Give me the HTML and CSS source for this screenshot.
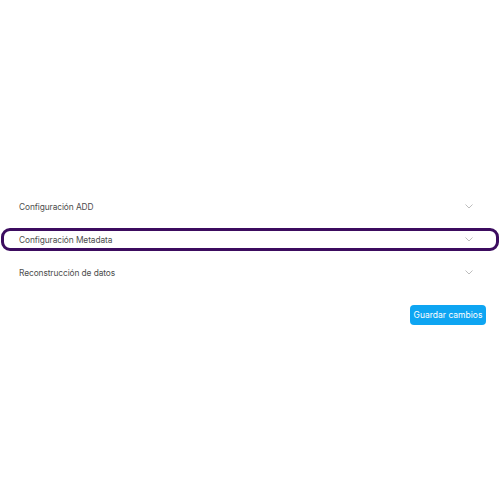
FILE: index.html
```html
<!DOCTYPE html>
<html lang="es">
<head>
<meta charset="utf-8">
<title>Configuración</title>
<link rel="stylesheet" href="styles.css">
</head>
<body>
<main class="page">
  <section class="list">
    <div class="row">
      <span class="label">Configuración ADD</span>
      <svg class="chev" width="8" height="5" viewBox="0 0 8 5"><path d="M0.5 0.5 L4 4 L7.5 0.5" fill="none" stroke="#bdbdbd" stroke-width="1"/></svg>
    </div>
    <div class="row active">
      <span class="label">Configuración Metadata</span>
      <svg class="chev" width="8" height="5" viewBox="0 0 8 5"><path d="M0.5 0.5 L4 4 L7.5 0.5" fill="none" stroke="#bdbdbd" stroke-width="1"/></svg>
    </div>
    <div class="row">
      <span class="label">Reconstrucción de datos</span>
      <svg class="chev" width="8" height="5" viewBox="0 0 8 5"><path d="M0.5 0.5 L4 4 L7.5 0.5" fill="none" stroke="#bdbdbd" stroke-width="1"/></svg>
    </div>
  </section>
  <div class="actions">
    <button class="save">Guardar cambios</button>
  </div>
</main>
</body>
</html>
```
FILE: styles.css
```css
html, body {
  margin: 0;
  padding: 0;
  background: #ffffff;
}
body {
  font-family: "Inter", "Open Sans", sans-serif;
  color: #444444;
}
.page {
  padding-top: 195px;
}
.list {
  display: flex;
  flex-direction: column;
  gap: 10.5px;
  padding: 0 1px;
}
.row {
  box-sizing: border-box;
  height: 22.5px;
  border: 3px solid transparent;
  border-radius: 9px;
  display: flex;
  align-items: center;
  justify-content: space-between;
  padding: 1px 23px 0 15px;
}
.row.active {
  border-color: #3c0c5f;
}
.label {
  font-size: 8.4px;
  color: #4d4d4d;
  letter-spacing: -0.1px;
}
.chev {
  display: block;
}
.actions {
  display: flex;
  justify-content: flex-end;
  padding: 21px 14px 0 0;
}
.save {
  font-family: "Inter", "Open Sans", sans-serif;
  font-size: 8.5px;
  color: #ffffff;
  background: #0ea5f2;
  border: none;
  border-radius: 4px;
  width: 76px;
  height: 20px;
  padding: 0;
}
```
